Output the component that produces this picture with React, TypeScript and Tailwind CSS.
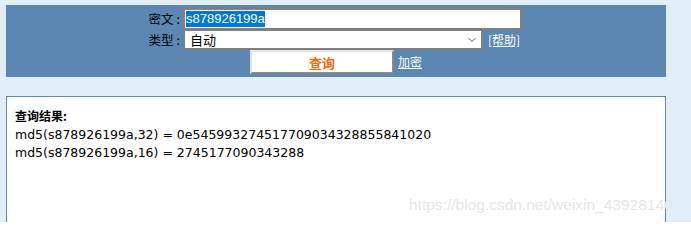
import { ChevronDown } from 'lucide-react';

const CJK = "font-['Noto_Sans_CJK_SC',sans-serif]";

export default function App() {
    return (
        <div className="relative w-[691px] h-[222px] overflow-hidden bg-[#e1edf7] pt-[5px] pl-[6px]">
            {/* 查询面板 */}
            <div className={`w-[660px] h-[72px] bg-[#5c87b2] pt-[3px] text-[12px] ${CJK}`}>
                <div className="flex items-center h-[22px]">
                    <span className="w-[174px] text-right text-black text-[12.5px]">密文<span className="ml-[3px]">:</span></span>
                    <div className="ml-[3px] w-[339px] h-[22px] border-2 border-[#808080] bg-white flex items-center pl-[1px]">
                        <span className="bg-[#0078d7] text-white text-[13px] leading-[16px] font-['Liberation_Sans',sans-serif]">s878926199a</span>
                    </div>
                </div>
                <div className="flex items-center h-[20px]">
                    <span className="w-[174px] text-right text-black text-[12.5px]">类型<span className="ml-[3px]">:</span></span>
                    <div className="ml-[4px] w-[299px] h-[20px] border-2 border-t-1 border-l-1 border-[#808080] bg-white flex items-center justify-between pl-[5px] pr-[3px]">
                        <span className="text-black text-[13px]">自动</span>
                        <ChevronDown className="w-[12px] h-[12px] text-[#555]" strokeWidth={2} />
                    </div>
                    <a className="ml-[5px] text-white underline">[帮助]</a>
                </div>
                <div className="flex items-center h-[24px] pl-[244px]">
                    <button className="w-[144px] h-[24px] bg-white border-2 border-t-[#e3e3e3] border-l-[#e3e3e3] border-b-[#8a8a8a] border-r-[#8a8a8a] text-[#ff6600] font-bold text-[13px] leading-none">
                        查询
                    </button>
                    <a className="ml-[4px] text-white underline">加密</a>
                </div>
            </div>

            {/* 查询结果 */}
            <div className="mt-[19px] w-[660px] h-[126px] bg-white border border-b-0 border-[#5c87b2] pt-[10px] pl-[8px] text-[12.5px] leading-[18.5px] text-black font-['DejaVu_Sans','Noto_Sans_CJK_SC',sans-serif]">
                <p className={`font-bold ${CJK} text-[12px]`}>查询结果:</p>
                <p>md5(s878926199a,32) = 0e545993274517709034328855841020</p>
                <p>md5(s878926199a,16) = 2745177090343288</p>
            </div>

            {/* 水印 */}
            <span className="absolute left-[409px] top-[193px] text-[15.5px] text-[#e6e6e6] font-['Liberation_Sans',sans-serif]">
                https://blog.csdn.net/weixin_43928140
            </span>
        </div>
    );
}
